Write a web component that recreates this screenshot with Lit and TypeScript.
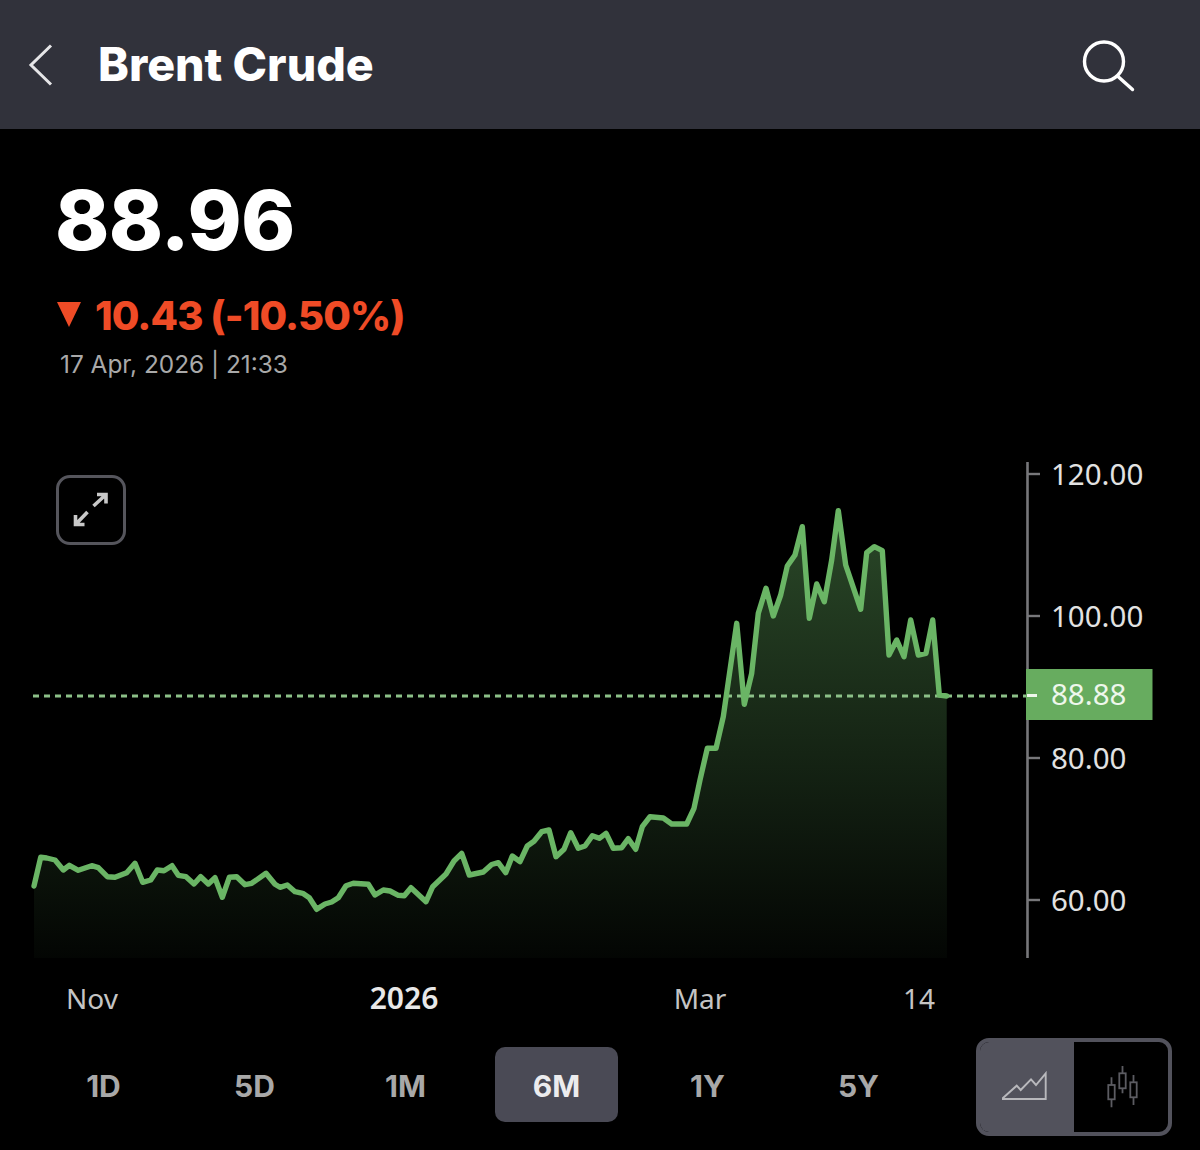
import { LitElement, html, css, svg } from "lit";
import { customElement } from "lit/decorators.js";

const PTS: [number, number][] = [
  [34,886],[40.7,857.3],[46.7,858],[55,860],[63.3,870],[69.3,865.3],[78.3,870.3],[91.7,865.7],[98.3,867.7],[107.3,876.7],[115,877.3],[126.7,872.7],[135,863.3],[142.7,882.3],[150.7,880],[157.3,870],[164,870.7],[172,865.7],[178.3,875.3],[186,876.7],[194,884],[200.7,876.7],[208.3,884],[215,877.7],[222.3,897.3],[229.3,877.3],[236.7,876.7],[245,884.7],[251.7,883.3],[266,873.3],[275,884.3],[280,887.3],[287.3,885],[295,891.7],[302.7,893.3],[309.3,897.7],[316.7,909.3],[325,904],[331.7,902],[338.3,897.7],[346,885.7],[353.3,883.3],[368.3,884.3],[375,895],[383.3,890],[390,891],[398.3,895.3],[404.3,895.7],[411,887.7],[426,901.7],[432.7,886.7],[446,874],[454,861],[461.7,853.3],[469.3,875],[483.3,872],[491.7,864.5],[498.3,862.7],[505.7,872.7],[512.3,856],[520,861.7],[527.3,846],[534,841.3],[541.7,831.7],[549,830],[556,856.7],[564,849.3],[570.7,832.7],[578.3,848.3],[585,846],[592.3,835.7],[599.3,838.3],[606,833.3],[613.3,848.3],[621.7,847.7],[628.3,838.7],[635.7,849.3],[642.3,826.7],[650,816.7],[663.3,818],[671.7,824],[686.7,824],[694,808.3],[700,780],[707.3,748.3],[716,748.3],[723.3,716.7],[736.7,623.3],[744.3,704.3],[751.7,673.3],[758.3,613.3],[766,588.3],[773.3,616],[780.7,595],[787.3,566],[795,555],[802.3,526.7],[809.3,618.3],[816.7,584],[824.3,601.7],[831.7,560],[838.3,510.7],[845.7,565],[860.7,609.3],[866.7,552.7],[874.3,546.7],[882.3,550.7],[889,655],[896.7,640],[904,656.7],[910.7,620],[918.3,655],[926,653.3],[932.7,620],[939.3,695],[946.7,696],
];

const TOP = 440;
const line = PTS.map(([x, y]) => `${x},${y - TOP}`).join(" ");
const area = `34,${958 - TOP} ${line} 947,${958 - TOP}`;
const RANGES = ["1D", "5D", "1M", "6M", "1Y", "5Y"];
const TICKS: [string, number][] = [["120.00", 474], ["100.00", 616], ["80.00", 758], ["60.00", 900]];
const MONTHS: [string, number, boolean][] = [["Nov", 92, false], ["2026", 404, true], ["Mar", 700, false], ["14", 919, false]];

@customElement("app-root")
export class AppRoot extends LitElement {
  static styles = css`
    :host { display: block; width: 1200px; height: 1150px; background: #000; overflow: hidden; font-family: Inter, "Liberation Sans", sans-serif; color: #fff; }
    .bar { height: 129px; background: #31323b; display: flex; align-items: center; padding: 0 65px 0 28px; }
    .back { width: 26px; height: 42px; margin-right: 45px; }
    .title { flex: 1; font-size: 46.5px; font-weight: 800; line-height: 1; margin-left: -1px; }
    .search { width: 54px; height: 54px; }
    .quote { height: 311px; padding: 48px 0 0 55px; box-sizing: border-box; }
    .price { font-size: 82px; font-weight: 800; line-height: 88px; letter-spacing: -0.8px; }
    .change { display: flex; align-items: center; margin-top: 25px; height: 50px; margin-left: 2px; color: #ef4b26; font-size: 40px; font-weight: 800; letter-spacing: -0.9px; }
    .tri { width: 24px; height: 26px; margin-right: 14px; margin-top: -1px; }
    .time { margin: 8px 0 0 5px; font-size: 24.4px; line-height: 32px; color: #a9a9a9; }
    .chart { position: relative; height: 590px; }
    .chart svg.plot { display: block; width: 1200px; height: 590px; }
    .axis { font-family: "Noto Sans", sans-serif; font-size: 29.5px; fill: #e2e2e2; }
    .month { font-family: "Noto Sans", sans-serif; font-size: 28px; fill: #c4c4c4; text-anchor: middle; }
    .month.strong { fill: #e8e8e8; font-weight: 600; font-size: 30px; }
    .last { font-family: "Noto Sans", sans-serif; font-size: 29.5px; fill: #eef7ec; }
    .expand { position: absolute; left: 56px; top: 35px; width: 70px; height: 70px; box-sizing: border-box; border: 3px solid #55555c; border-radius: 14px; display: flex; align-items: center; justify-content: center; }
    .expand svg { width: 38px; height: 38px; }
    .controls { display: flex; align-items: center; height: 120px; padding-left: 28px; margin-top: -6px; }
    .ranges { display: grid; grid-template-columns: repeat(6, 151px); }
    .range { height: 72px; padding-top: 3px; margin: 0 14px; display: flex; align-items: center; justify-content: center; font-size: 30px; font-weight: 700; color: #a8a8a8; border-radius: 10px; }
    .range.on { background: #4a4a55; color: #ececee; }
    .toggle { margin: 6px 0 0 42px; width: 196px; height: 98px; box-sizing: border-box; border: 4px solid #52525c; border-radius: 13px; display: flex; overflow: hidden; }
    .opt { display: flex; align-items: center; justify-content: center; }
    .opt.on { width: 94px; background: #52525c; }
    .opt.off { flex: 1; }
    .opt svg { width: 50px; height: 50px; }
  `;

  render() {
    return html`
      <div class="bar">
        <svg class="back" viewBox="0 0 26 42" fill="none" stroke="#e6e6e8" stroke-width="3"><path d="M23 1.5 3 21l20 19.5" /></svg>
        <div class="title">Brent Crude</div>
        <svg class="search" viewBox="0 0 54 54" fill="none" stroke="#fff" stroke-width="3.4" stroke-linecap="round"><circle cx="23" cy="23.500" r="19.500" /><path d="M37 38.500 51.500 51.500" /></svg>
      </div>
      <div class="quote">
        <div class="price">88.96</div>
        <div class="change">
          <svg class="tri" viewBox="0 0 24 26"><path d="M0 0h24L12 25z" fill="#ef4b26" /></svg>
          <span>10.43 (-10.50%)</span>
        </div>
        <div class="time">17 Apr, 2026 | 21:33</div>
      </div>
      <div class="chart">
        <svg class="plot" viewBox="0 0 1200 590">
          <defs>
            <linearGradient id="fade" gradientUnits="userSpaceOnUse" x1="0" y1="70" x2="0" y2="518">
              <stop offset="0" stop-color="#6ab565" stop-opacity="0.4" />
              <stop offset="1" stop-color="#6ab565" stop-opacity="0.03" />
            </linearGradient>
          </defs>
          ${svg`
            <polygon points=${area} fill="url(#fade)" />
            <line x1="33" y1="256" x2="1027" y2="256" stroke="#8cc088" stroke-width="3" stroke-dasharray="6 5" />
            <polyline points=${line} fill="none" stroke="#6ab565" stroke-width="5.4" stroke-linejoin="round" stroke-linecap="round" />
            <line x1="1027.5" y1="22" x2="1027.5" y2="518" stroke="#77777a" stroke-width="2.6" />
            ${TICKS.map(([t, y]) => svg`
              <line x1="1027" y1=${y - TOP} x2="1040" y2=${y - TOP} stroke="#77777a" stroke-width="2.4" />
              <text class="axis" x="1051" y=${y - TOP + 11}>${t}</text>`)}
            <rect x="1026" y="229" width="126.5" height="51" fill="#67ac5f" />
            <line x1="1027" y1="255.500" x2="1037" y2="255.500" stroke="#eef7ec" stroke-width="3" />
            <text class="last" x="1051" y="265">88.88</text>
            ${MONTHS.map(([t, x, strong]) => svg`<text class="month ${strong ? "strong" : ""}" x=${x} y="569">${t}</text>`)}
          `}
        </svg>
        <div class="expand">
          <svg viewBox="0 0 38 38" fill="none" stroke="#c8c8c8" stroke-width="3.6"><path d="M34 3.500 21.500 15M25 3.500H34V12.500M3.500 33.500 15.500 21M3.500 24V33.500H12.500" /></svg>
        </div>
      </div>
      <div class="controls">
        <div class="ranges">
          ${RANGES.map((r) => html`<div class="range ${r === "6M" ? "on" : ""}">${r}</div>`)}
        </div>
        <div class="toggle">
          <div class="opt on">
            <svg viewBox="0 0 50 50" fill="none" stroke="#b8b8bc" stroke-width="1.9"><path d="M.7 36.300 14.700 23.700 18.700 28 29 17.300 34 23 43.700 11.300V37H.7z" /></svg>
          </div>
          <div class="opt off">
            <svg viewBox="0 0 50 50" fill="none" stroke="#5c5c62" stroke-width="1.8"><path d="M15.500 15.300V23M15.500 37.300V45.300M26.500 4V11.300M26.500 26.300V31.300M37.500 13V20.300M37.500 35.300V43" /><rect x="12.300" y="23" width="6.400" height="14.300" /><rect x="23.300" y="11.300" width="6.400" height="15" /><rect x="34.300" y="20.300" width="6.400" height="15" /></svg>
          </div>
        </div>
      </div>
    `;
  }
}
